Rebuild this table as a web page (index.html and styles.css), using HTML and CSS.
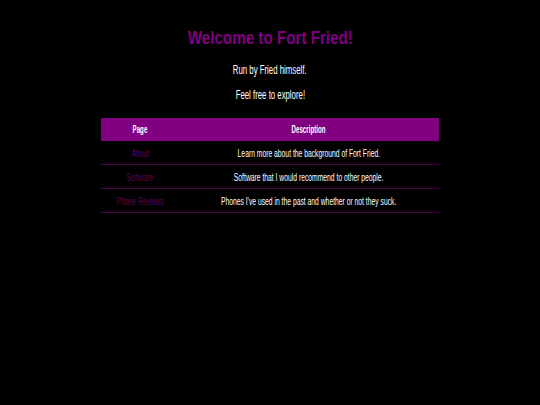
FILE: index.html
```html
<!DOCTYPE html>
<html>
<head>
<meta charset="utf-8">
<link rel="stylesheet" href="styles.css">
</head>
<body>
<div class="page">
  <h1 class="title"><span class="sq sq-title">Welcome to Fort Fried!</span></h1>
  <p class="lead"><span class="sq sq-lead">Run by Fried himself.</span></p>
  <p class="lead"><span class="sq sq-lead">Feel free to explore!</span></p>
  <table class="pages">
    <colgroup><col class="col-page"><col class="col-desc"></colgroup>
    <thead>
      <tr><th><div class="cell"><span class="sq sq-cell">Page</span></div></th><th><div class="cell"><span class="sq sq-cell">Description</span></div></th></tr>
    </thead>
    <tbody>
      <tr><td><div class="cell"><a href="#" class="sq sq-cell">About</a></div></td><td><div class="cell"><span class="sq sq-cell">Learn more about the background of Fort Fried.</span></div></td></tr>
      <tr><td><div class="cell"><a href="#" class="sq sq-cell">Software</a></div></td><td><div class="cell"><span class="sq sq-cell">Software that I would recommend to other people.</span></div></td></tr>
      <tr><td><div class="cell"><a href="#" class="sq sq-cell">Phone Reviews</a></div></td><td><div class="cell"><span class="sq sq-cell">Phones I've used in the past and whether or not they suck.</span></div></td></tr>
    </tbody>
  </table>
</div>
</body>
</html>
```
FILE: styles.css
```css
html, body {
  margin: 0;
  padding: 0;
  background: #000;
}
body {
  font-family: "Liberation Sans", Arial, sans-serif;
  color: #fff;
}
.page {
  display: flex;
  flex-direction: column;
  align-items: center;
  padding-top: 27px;
}
.sq {
  display: inline-block;
  flex: none;
  transform-origin: center;
  white-space: nowrap;
}
.sq-title {
  transform: scaleX(0.8);
}
.sq-lead {
  transform: scaleX(0.65);
}
.sq-cell {
  transform: scaleX(0.615);
}
.title {
  margin: 0;
  font-size: 19px;
  font-weight: bold;
  color: #800080;
  line-height: 22px;
}
.lead {
  margin: 0;
  font-size: 12px;
  line-height: 14px;
  margin-top: 14px;
}
.lead + .lead {
  margin-top: 11px;
}
.pages {
  margin-top: 16px;
  width: 338px;
  table-layout: fixed;
  border-collapse: collapse;
  font-size: 11px;
}
.col-page {
  width: 78px;
}
.cell {
  display: flex;
  justify-content: center;
  align-items: center;
  min-width: 0;
}
.pages th {
  background: #800080;
  color: #fff;
  font-weight: bold;
  font-size: 10px;
  height: 23px;
  padding: 0;
}
.pages td {
  text-align: center;
  height: 23px;
  padding: 0;
  border-bottom: 1px solid #4a004a;
}
.pages a {
  color: #5c005c;
  text-decoration: none;
}
```
